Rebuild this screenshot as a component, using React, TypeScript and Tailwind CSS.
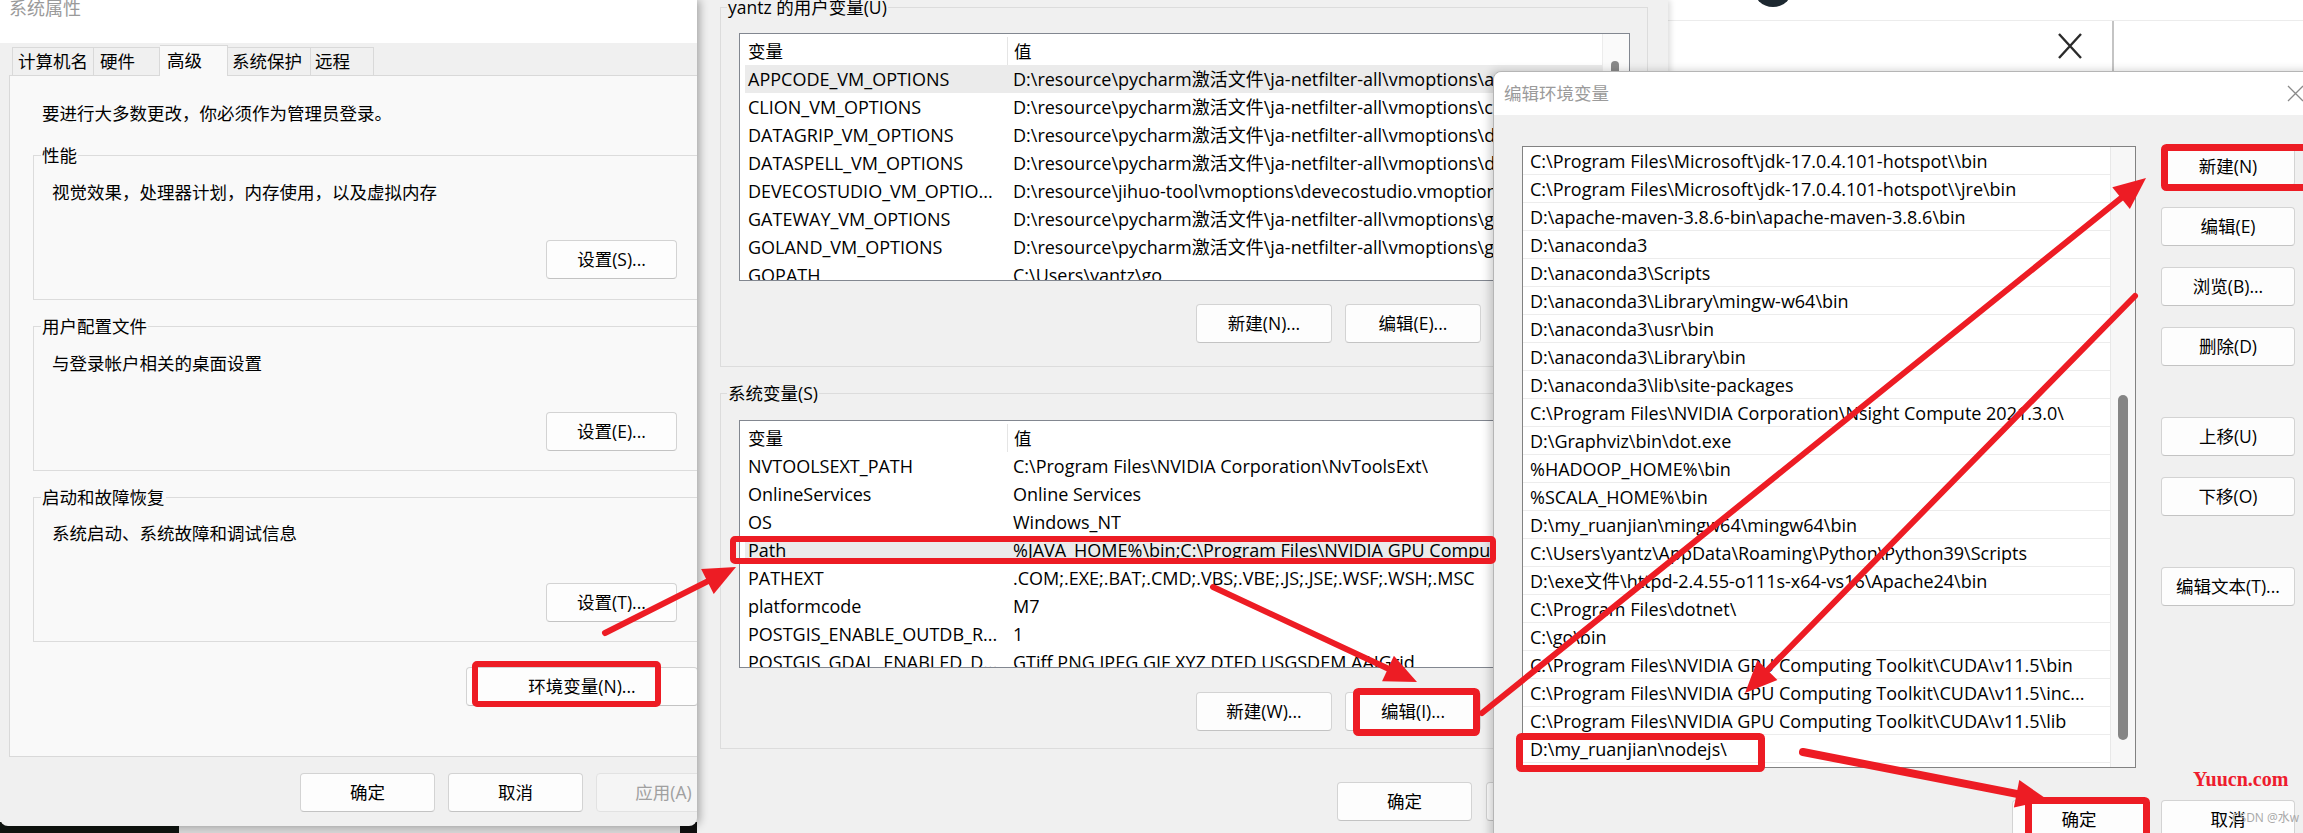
import React from 'react';

const RED = '#ed1c24';
// paths are typed with "/" and shown with "\"
const bs = (s: string) => s.replace(/\//g, '\\');

const userVars: [string, string][] = [
  ['APPCODE_VM_OPTIONS', 'D:/resource/pycharm激活文件/ja-netfilter-all/vmoptions/appcode.vmoptions'],
  ['CLION_VM_OPTIONS', 'D:/resource/pycharm激活文件/ja-netfilter-all/vmoptions/clion.vmoptions'],
  ['DATAGRIP_VM_OPTIONS', 'D:/resource/pycharm激活文件/ja-netfilter-all/vmoptions/datagrip.vmoptions'],
  ['DATASPELL_VM_OPTIONS', 'D:/resource/pycharm激活文件/ja-netfilter-all/vmoptions/dataspell.vmoptions'],
  ['DEVECOSTUDIO_VM_OPTIO...', 'D:/resource/jihuo-tool/vmoptions/devecostudio.vmoptions'],
  ['GATEWAY_VM_OPTIONS', 'D:/resource/pycharm激活文件/ja-netfilter-all/vmoptions/gateway.vmoptions'],
  ['GOLAND_VM_OPTIONS', 'D:/resource/pycharm激活文件/ja-netfilter-all/vmoptions/goland.vmoptions'],
  ['GOPATH', 'C:/Users/yantz/go'],
  ['IDEA_VM_OPTIONS', 'D:/resource/pycharm激活文件/ja-netfilter-all/vmoptions/idea.vmoptions'],
];

const systemVars: [string, string][] = [
  ['NVTOOLSEXT_PATH', 'C:/Program Files/NVIDIA Corporation/NvToolsExt/'],
  ['OnlineServices', 'Online Services'],
  ['OS', 'Windows_NT'],
  ['Path', '%JAVA_HOME%/bin;C:/Program Files/NVIDIA GPU Computing Toolkit/CUDA/v11.5/bin;C:/Program Files/NVIDIA GPU Computing Toolkit/CUDA/v11.5/libnvvp'],
  ['PATHEXT', '.COM;.EXE;.BAT;.CMD;.VBS;.VBE;.JS;.JSE;.WSF;.WSH;.MSC'],
  ['platformcode', 'M7'],
  ['POSTGIS_ENABLE_OUTDB_R...', '1'],
  ['POSTGIS_GDAL_ENABLED_D...', 'GTiff PNG JPEG GIF XYZ DTED USGSDEM AAIGrid'],
  ['PROCESSOR_ARCHITECTURE', 'AMD64'],
];

const pathEntries = [
  'C:/Program Files/Microsoft/jdk-17.0.4.101-hotspot//bin',
  'C:/Program Files/Microsoft/jdk-17.0.4.101-hotspot//jre/bin',
  'D:/apache-maven-3.8.6-bin/apache-maven-3.8.6/bin',
  'D:/anaconda3',
  'D:/anaconda3/Scripts',
  'D:/anaconda3/Library/mingw-w64/bin',
  'D:/anaconda3/usr/bin',
  'D:/anaconda3/Library/bin',
  'D:/anaconda3/lib/site-packages',
  'C:/Program Files/NVIDIA Corporation/Nsight Compute 2021.3.0/',
  'D:/Graphviz/bin/dot.exe',
  '%HADOOP_HOME%/bin',
  '%SCALA_HOME%/bin',
  'D:/my_ruanjian/mingw64/mingw64/bin',
  'C:/Users/yantz/AppData/Roaming/Python/Python39/Scripts',
  'D:/exe文件/httpd-2.4.55-o111s-x64-vs16/Apache24/bin',
  'C:/Program Files/dotnet/',
  'C:/go/bin',
  'C:/Program Files/NVIDIA GPU Computing Toolkit/CUDA/v11.5/bin',
  'C:/Program Files/NVIDIA GPU Computing Toolkit/CUDA/v11.5/inc...',
  'C:/Program Files/NVIDIA GPU Computing Toolkit/CUDA/v11.5/lib',
  'D:/my_ruanjian/nodejs/',
  '',
];

function Btn({ label, className = '', disabled = false }: { label: string; className?: string; disabled?: boolean }) {
  return (
    <div
      className={`flex h-[39px] shrink-0 items-center justify-center rounded-[4px] border text-[17.5px] ${
        disabled ? 'border-[#e2e2e2] bg-[#f5f5f5] text-[#a0a0a0]' : 'border-[#d3d3d3] border-b-[#c3c3c3] bg-[#fdfdfd] text-black'
      } ${className}`}
    >
      {label}
    </div>
  );
}

function VarList({ rows, sel, scroll }: { rows: [string, string][]; sel: number; scroll?: boolean }) {
  return (
    <div className="flex h-[248px] w-[891px] overflow-hidden border border-[#828790] bg-white">
      <div className="flex min-w-0 flex-1 flex-col">
        {/* header */}
        <div className="flex h-[31px] shrink-0 items-center pt-[3px]">
          <div className="w-[267px] pl-[8px]">变量</div>
          <div className="h-full border-l border-[#e5e5e5] pl-[6px] leading-[28px]">值</div>
        </div>
        {rows.map(([name, value], i) =>
          i === sel ? (
            <div key={name} className="ml-[5px] flex h-[28px] shrink-0 items-center bg-[#ebebeb] text-[18px]">
              <div className="w-[262px] shrink-0 overflow-hidden whitespace-nowrap pl-[3px]">{name}</div>
              <div className="min-w-0 overflow-hidden whitespace-nowrap pl-[6px]">{bs(value)}</div>
            </div>
          ) : (
            <div key={name} className="flex h-[28px] shrink-0 items-center text-[18px]">
              <div className="w-[267px] shrink-0 overflow-hidden whitespace-nowrap pl-[8px]">{name}</div>
              <div className="min-w-0 overflow-hidden whitespace-nowrap pl-[6px]">{bs(value)}</div>
            </div>
          )
        )}
      </div>
      {scroll && (
        <div className="w-[27px] shrink-0 border-l border-[#ececec] bg-[#fafafa]">
          <div className="ml-[8px] mt-[27px] h-[180px] w-[8px] rounded-full bg-[#8a8a8a]" />
        </div>
      )}
    </div>
  );
}

function Arrow({ from, to, width = 6, head = 32, half = 14 }: { from: [number, number]; to: [number, number]; width?: number; head?: number; half?: number }) {
  const [x1, y1] = from;
  const [x2, y2] = to;
  const d = Math.hypot(x2 - x1, y2 - y1);
  const ux = (x2 - x1) / d;
  const uy = (y2 - y1) / d;
  const bx = x2 - ux * head;
  const by = y2 - uy * head;
  const pts = `${x2},${y2} ${bx - uy * half},${by + ux * half} ${bx + uy * half},${by - ux * half}`;
  return (
    <g>
      <line x1={x1} y1={y1} x2={bx + ux * 4} y2={by + uy * 4} stroke={RED} strokeWidth={width} strokeLinecap="round" />
      <polygon points={pts} fill={RED} />
    </g>
  );
}

export default function App() {
  return (
    <div className="relative h-[833px] w-[2303px] overflow-hidden bg-white font-['Open_Sans','Noto_Sans_CJK_SC',sans-serif] text-[17.5px] text-black">
      {/* window in the back, top right */}
      <div className="absolute left-[1668px] top-0 h-[71px] w-[635px] bg-white">
        <div className="flex h-[21px] border-b border-[#ececec]">
          <svg className="ml-[85px]" width="40" height="21" viewBox="0 0 40 21">
            <circle cx="20" cy="-13" r="20" fill="#1d2830" />
          </svg>
        </div>
        <div className="flex h-[50px] items-center">
          <svg className="ml-[389px]" width="26" height="26" viewBox="0 0 26 26">
            <path d="M2 1 L24 25 M24 1 L2 25" stroke="#2b2b2b" strokeWidth="2.4" fill="none" />
          </svg>
          <div className="ml-[29px] h-full border-l-2 border-[#c4c4c4]" />
        </div>
      </div>

      {/* desktop edge under the first dialog */}
      <div className="absolute left-0 top-[822px] flex h-[11px] w-[700px]">
        <div className="w-[179px] bg-[#0f1410]" />
        <div className="flex-1 bg-[#d6d6d6]" />
        <div className="w-[20px] bg-[#111111]" />
      </div>

      {/* 系统属性 */}
      <div className="absolute left-0 top-0 z-20 h-[826px] w-[697px] overflow-hidden rounded-b-[8px] bg-[#f0f0f0] shadow-[3px_0_8px_rgba(0,0,0,0.3)]">
        <div className="h-[43px] bg-white pl-[9px] text-[18px] leading-[16px] text-[#9a9a9a]">系统属性</div>
        <div className="pl-[9px] pt-[2px]">
          <div className="flex h-[30px] items-end pl-[3px]">
            <div className="h-[28px] w-[82px] border border-b-0 border-[#d9d9d9] bg-[#f0f0f0] pl-[5px] leading-[27px]">计算机名</div>
            <div className="h-[28px] w-[66px] border border-b-0 border-l-0 border-[#d9d9d9] bg-[#f0f0f0] pl-[6px] leading-[27px]">硬件</div>
            <div className="relative z-10 -mb-px h-[31px] w-[68px] border border-b-0 border-l-0 border-[#d9d9d9] bg-[#f9f9f9] pl-[7px] leading-[28px]">高级</div>
            <div className="h-[28px] w-[83px] border border-b-0 border-l-0 border-[#d9d9d9] bg-[#f0f0f0] pl-[4px] leading-[27px]">系统保护</div>
            <div className="h-[28px] w-[63px] border border-b-0 border-l-0 border-[#d9d9d9] bg-[#f0f0f0] pl-[4px] leading-[27px]">远程</div>
          </div>
          <div className="h-[682px] w-[700px] border border-[#d9d9d9] bg-[#f9f9f9]">
            <p className="mt-[25px] pl-[32px] leading-[24px]">要进行大多数更改，你必须作为管理员登录。</p>

            <fieldset className="ml-[23px] mt-[18px] w-[668px] border border-[#dcdcdc] pb-[20px]">
              <legend className="ml-[7px] px-px leading-[24px]">性能</legend>
              <p className="mt-[13px] pl-[18px] leading-[24px]">视觉效果，处理器计划，内存使用，以及虚拟内存</p>
              <div className="mt-[36px] flex justify-end pr-[23px]">
                <Btn label="设置(S)..." className="w-[131px]" />
              </div>
            </fieldset>

            <fieldset className="ml-[23px] mt-[14px] w-[668px] border border-[#dcdcdc] pb-[19px]">
              <legend className="ml-[7px] px-px leading-[24px]">用户配置文件</legend>
              <p className="mt-[13px] pl-[18px] leading-[24px]">与登录帐户相关的桌面设置</p>
              <div className="mt-[37px] flex justify-end pr-[23px]">
                <Btn label="设置(E)..." className="w-[131px]" />
              </div>
            </fieldset>

            <fieldset className="ml-[23px] mt-[14px] w-[668px] border border-[#dcdcdc] pb-[19px]">
              <legend className="ml-[7px] px-px leading-[24px]">启动和故障恢复</legend>
              <p className="mt-[12px] pl-[18px] leading-[24px]">系统启动、系统故障和调试信息</p>
              <div className="mt-[38px] flex justify-end pr-[23px]">
                <Btn label="设置(T)..." className="w-[131px]" />
              </div>
            </fieldset>

            <div className="ml-[456px] mt-[25px]">
              <Btn label="环境变量(N)..." className="w-[232px]" />
            </div>
          </div>
        </div>
        <div className="mt-[16px] flex gap-[13px] pl-[300px]">
          <Btn label="确定" className="w-[135px]" />
          <Btn label="取消" className="w-[135px]" />
          <Btn label="应用(A)" className="w-[135px]" disabled />
        </div>
      </div>

      {/* 环境变量 */}
      <div className="absolute left-[697px] top-0 z-10 h-[833px] w-[971px] bg-[#f0f0f0] shadow-[2px_0_6px_rgba(0,0,0,0.15)]">
        <fieldset className="-mt-[5px] ml-[23px] w-[928px] border border-[#dcdcdc] pb-[23px]">
          <legend className="ml-[6px] px-px leading-[24px]">yantz 的用户变量(U)</legend>
          <div className="ml-[18px] mt-[14px]">
            <VarList rows={userVars} sel={0} scroll />
          </div>
          <div className="ml-[475px] mt-[23px] flex gap-[13px]">
            <Btn label="新建(N)..." className="w-[136px]" />
            <Btn label="编辑(E)..." className="w-[136px]" />
            <Btn label="删除(D)" className="w-[136px]" />
          </div>
        </fieldset>

        <fieldset className="ml-[23px] mt-[14px] w-[928px] border border-[#dcdcdc] pb-[17px]">
          <legend className="ml-[6px] px-px leading-[24px]">系统变量(S)</legend>
          <div className="ml-[18px] mt-[15px]">
            <VarList rows={systemVars} sel={3} />
          </div>
          <div className="ml-[475px] mt-[24px] flex gap-[13px]">
            <Btn label="新建(W)..." className="w-[136px]" />
            <Btn label="编辑(I)..." className="w-[136px]" />
            <Btn label="删除(L)" className="w-[136px]" />
          </div>
        </fieldset>

        <div className="ml-[640px] mt-[33px] flex gap-[14px]">
          <Btn label="确定" className="w-[135px]" />
          <Btn label="取消" className="w-[135px]" />
        </div>
      </div>

      {/* 编辑环境变量 */}
      <div className="absolute left-[1493px] top-[71px] z-30 h-[770px] w-[830px] rounded-tl-[8px] border border-[#b5b5b5] bg-[#f0f0f0] shadow-[-3px_0_10px_rgba(0,0,0,0.2)]">
        <div className="flex h-[43px] items-center rounded-tl-[8px] bg-white pl-[10px] text-[#9b9b9b]">
          编辑环境变量
          <svg className="ml-auto mr-[18px]" width="17" height="17" viewBox="0 0 17 17">
            <path d="M1 1 L16 16 M16 1 L1 16" stroke="#8a8a8a" strokeWidth="1.3" fill="none" />
          </svg>
        </div>
        <div className="flex pl-[28px] pt-[31px]">
          <div className="flex h-[622px] w-[614px] overflow-hidden border border-[#828282] bg-white">
            <div className="flex min-w-0 flex-1 flex-col">
              {pathEntries.map((p, i) => (
                <div key={i} className="h-[28px] shrink-0 overflow-hidden whitespace-nowrap border-b border-[#ececec] pl-[7px] pt-[2px] text-[18px] leading-[25px]">
                  {bs(p)}
                </div>
              ))}
            </div>
            <div className="w-[25px] shrink-0 border-l border-[#e8e8e8] bg-[#f7f7f7]">
              <div className="ml-[7px] mt-[248px] h-[345px] w-[10px] rounded-full bg-[#858585]" />
            </div>
          </div>
          <div className="ml-[25px] flex flex-col pt-[1px]">
            <Btn label="新建(N)" className="w-[134px]" />
            <Btn label="编辑(E)" className="mt-[21px] w-[134px]" />
            <Btn label="浏览(B)..." className="mt-[21px] w-[134px]" />
            <Btn label="删除(D)" className="mt-[21px] w-[134px]" />
            <Btn label="上移(U)" className="mt-[51px] w-[134px]" />
            <Btn label="下移(O)" className="mt-[21px] w-[134px]" />
            <Btn label="编辑文本(T)..." className="mt-[51px] w-[134px]" />
          </div>
        </div>
        <div className="mt-[32px] flex gap-[15px] pl-[518px]">
          <Btn label="确定" className="w-[134px]" />
          <Btn label="取消" className="w-[134px]" />
        </div>
      </div>

      {/* red annotations */}
      <svg className="pointer-events-none absolute left-0 top-0 z-40" width="2303" height="833" viewBox="0 0 2303 833">
        <g fill="none" stroke={RED}>
          <rect x="475" y="664" width="183" height="40" strokeWidth="6" rx="2" />
          <rect x="733" y="539" width="760" height="22" strokeWidth="6" rx="2" />
          <rect x="1356.5" y="691.5" width="120" height="41" strokeWidth="7" rx="2" />
          <rect x="2164.5" y="147.5" width="150" height="40" strokeWidth="7" rx="2" />
          <rect x="1519.5" y="736.5" width="242" height="32" strokeWidth="7" rx="2" />
          <rect x="2028.5" y="800.5" width="118" height="40" strokeWidth="7" rx="2" />
        </g>
        <Arrow from={[605, 633]} to={[736, 567]} />
        <Arrow from={[1213, 587]} to={[1417, 682]} />
        <Arrow from={[1482, 713]} to={[2146, 178]} />
        <Arrow from={[2135, 296]} to={[1745, 693]} />
        <Arrow from={[1803, 752]} to={[2048, 800]} width={8} />
      </svg>

      <div className="absolute left-[2193px] top-[767px] z-50 font-['Liberation_Serif',serif] text-[20px] font-bold leading-[24px] text-[#ee1c2e]">
        Yuucn.com
      </div>
      <div className="absolute left-[2232px] top-[811px] z-50 text-[12px] leading-[14px] text-[#a8a8a8]">CSDN @水w</div>
    </div>
  );
}
